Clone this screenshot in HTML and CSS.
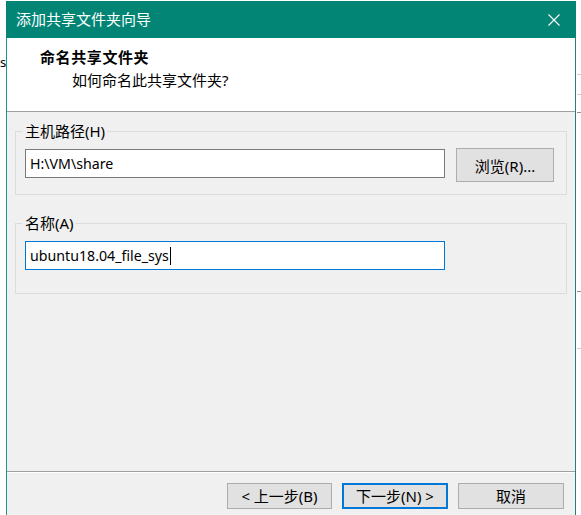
FILE: index.html
```html
<!DOCTYPE html>
<html lang="zh-CN">
<head>
<meta charset="utf-8">
<title>添加共享文件夹向导</title>
<link rel="stylesheet" href="styles.css">
</head>
<body>
<div class="desk-s">s</div>
<div class="desk-lines">
  <div class="dl dl1"></div>
  <div class="dl dl2"></div>
  <div class="dl dl3"></div>
  <div class="dl dl4"></div>
  <div class="dl dl5"></div>
</div>
<div class="dialog">
  <div class="titlebar">
    <span class="title">添加共享文件夹向导</span>
    <svg class="close" width="12" height="12" viewBox="0 0 12 12">
      <path d="M0.5 0.5 L11.5 11.5 M11.5 0.5 L0.5 11.5" stroke="#fff" stroke-width="1.1" fill="none"/>
    </svg>
  </div>
  <div class="header">
    <div class="h-title">命名共享文件夹</div>
    <div class="h-sub">如何命名此共享文件夹?</div>
  </div>
  <div class="body">
    <fieldset class="group g1">
      <legend>主机路径(H)</legend>
      <div class="row">
        <div class="input"><span class="lat">H:\VM\share</span></div>
        <button class="btn browse">浏览(R)...</button>
      </div>
    </fieldset>
    <fieldset class="group g2">
      <legend>名称(A)</legend>
      <div class="row">
        <div class="input focus"><span class="lat">ubuntu18.04_file_sys</span><span class="caret"></span></div>
      </div>
    </fieldset>
  </div>
  <div class="footer">
    <button class="btn fbtn back">&lt; 上一步(B)</button>
    <button class="btn fbtn next">下一步(N) &gt;</button>
    <button class="btn fbtn cancel">取消</button>
  </div>
</div>
</body>
</html>
```
FILE: styles.css
```css
html, body {
  margin: 0;
  padding: 0;
  background: #ffffff;
  overflow: hidden;
}
body {
  width: 581px;
  height: 515px;
  position: relative;
  font-family: "Noto Sans", "Noto Sans CJK SC", sans-serif;
  font-size: 15px;
  color: #000;
}

.desk-s {
  position: absolute;
  left: 0;
  top: 52px;
  font-size: 13px;
  line-height: 20px;
  color: #000;
}
.desk-lines .dl {
  position: absolute;
  left: 577px;
  width: 6px;
  height: 1px;
  background: #d0d0d0;
}
.dl1 { top: 74px; }
.dl2 { top: 94px; }
.dl3 { top: 112px; background: #909090 !important; }
.dl4 { top: 291px; background: #909090 !important; }
.dl5 { top: 348px; }

.dialog {
  position: absolute;
  left: 6px;
  top: 1px;
  width: 570px;
  height: 540px;
  box-sizing: border-box;
  border-left: 1px solid #1f9585;
  border-right: 1px solid #2a7f75;
  background: #f0f0f0;
  display: flex;
  flex-direction: column;
}

.titlebar {
  height: 37px;
  flex: none;
  background: #038575;
  margin: 0 -1px;
  padding: 0 0 0 10px;
  display: flex;
  align-items: center;
  justify-content: space-between;
  color: #fff;
}
.title {
  font-size: 15px;
  line-height: 20px;
  margin-top: -1px;
}
.close {
  margin-right: 16px;
  margin-top: 1px;
}

.header {
  height: 74px;
  flex: none;
  box-sizing: border-box;
  background: #fff;
  border-bottom: 1px solid #a0a0a0;
  padding: 9px 0 0 33px;
}
.h-title {
  font-weight: bold;
  font-size: 15px;
  line-height: 20px;
  letter-spacing: 0.6px;
}
.h-sub {
  font-size: 15px;
  line-height: 20px;
  margin: 3px 0 0 32px;
}

.body {
  height: 359px;
  flex: none;
  box-sizing: border-box;
  padding-top: 10px;
}

.group {
  margin: 0 8px;
  border: 1px solid #dcdcdc;
  padding: 9px 12px 12px 6px;
  min-width: 0;
}
.group legend {
  font-size: 15px;
  line-height: 18px;
  padding: 0 2px 0 3px;
}
.g2 {
  margin-top: 19px;
  padding-bottom: 23px;
}

.row {
  display: flex;
  align-items: flex-start;
  gap: 11px;
  margin-left: 3px;
}
.input {
  width: 420px;
  height: 29px;
  box-sizing: border-box;
  border: 1px solid #7a7a7a;
  background: #fff;
  padding: 0 4px;
  line-height: 26px;
  font-size: 15px;
  white-space: nowrap;
  display: flex;
  align-items: center;
}
.lat {
  font-size: 14.2px;
  line-height: 20px;
}
.input.focus {
  border-color: #0078d7;
}
.caret {
  display: inline-block;
  width: 1px;
  height: 18px;
  background: #000;
  margin-left: 1px;
}

.btn {
  font-family: "Noto Sans", "Noto Sans CJK SC", sans-serif;
  font-size: 15px;
  color: #000;
  background: #e1e1e1;
  border: 1px solid #adadad;
  box-sizing: border-box;
  padding: 0;
  margin: 0;
  display: flex;
  align-items: center;
  justify-content: center;
}
.browse {
  width: 98px;
  height: 34px;
  margin-top: -1px;
}

.footer {
  flex: none;
  border-top: 1px solid #a0a0a0;
  box-shadow: inset 0 1px 0 #ffffff;
  padding: 11px 11px 0 0;
  display: flex;
  justify-content: flex-end;
  gap: 10px;
}
.fbtn {
  width: 106px;
  height: 26px;
  line-height: 20px;
}
.back {
  width: 105px;
}
.next {
  border: 2px solid #0078d7;
}
```
